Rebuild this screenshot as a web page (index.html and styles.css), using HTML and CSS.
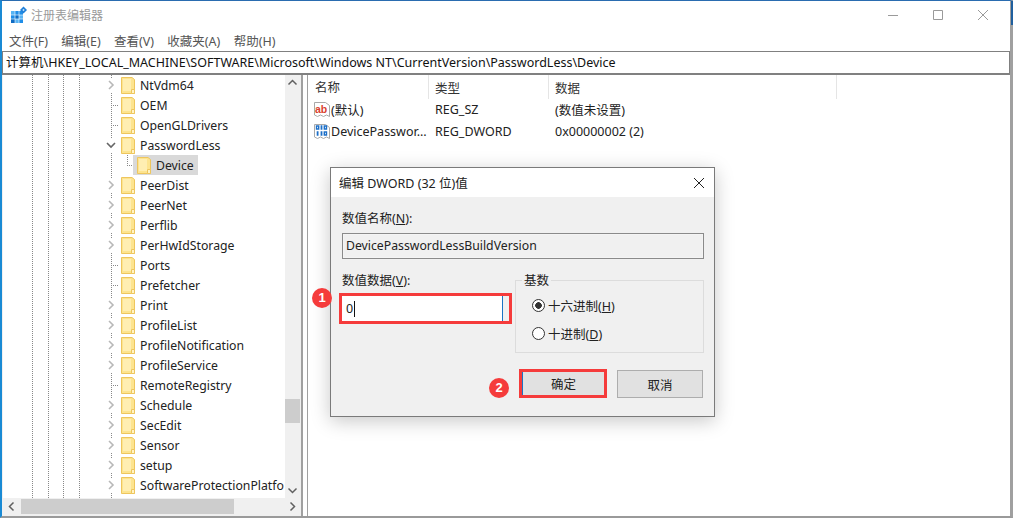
FILE: index.html
```
<!DOCTYPE html>
<html lang="zh-CN">
<head>
<meta charset="utf-8">
<title>注册表编辑器</title>
<link rel="stylesheet" href="styles.css">
</head>
<body>
<svg class="defs" width="0" height="0" aria-hidden="true">
  <symbol id="folder" viewBox="0 0 14 17">
    <path d="M.5.5h10.500l2.500 2v14H.5z" fill="#fde48f" stroke="#eec65e"/>
    <path d="M2 2h8v12H2z" fill="#ffeeb2"/>
    <path d="M10.500 12.500h3v4h-3z" fill="#fff3c4" stroke="#eec65e"/>
  </symbol>
  <symbol id="chev-r" viewBox="0 0 10 10"><path d="M3 1l4 4-4 4" fill="none" stroke="#b8b8b8" stroke-width="1.600"/></symbol>
  <symbol id="chev-d" viewBox="0 0 10 10"><path d="M1 3l4 4 4-4" fill="none" stroke="#666" stroke-width="1.600"/></symbol>
</svg>
<div class="window">
  <header class="titlebar">
    <svg class="app-icon" width="18" height="18" viewBox="0 0 18 18">
      <path d="M1 5h12v12H1z" fill="#1f8ee8"/>
      <path d="M1 5h4v4H1zM9 9h4v4H9zM5 13h4v4H5z" fill="#57b4f5"/>
      <path d="M5 9h4v4H5zM1 13h4v4H1z" fill="#0f6cc4"/>
      <path d="M5 5v12M9 5v12M1 9h12M1 13h12" stroke="#fff" stroke-width=".6"/>
      <path d="M13.500 .5l3.500 3.500-3.500 3.500L10 4z" fill="#1f7fd8"/>
      <path d="M13.500 2.800l1.200 1.200-1.200 1.200L12.300 4z" fill="#bfe2fb"/>
    </svg>
    <span class="title">注册表编辑器</span>
    <div class="controls">
      <svg width="12" height="12" viewBox="0 0 12 12"><path d="M1 6.500h10" stroke="#9a9a9a"/></svg>
      <svg width="12" height="12" viewBox="0 0 12 12"><path d="M1.500 1.500h9v9h-9z" fill="none" stroke="#9a9a9a"/></svg>
      <svg width="12" height="12" viewBox="0 0 12 12"><path d="M1 1l10 10M11 1L1 11" stroke="#9a9a9a"/></svg>
    </div>
  </header>
  <nav class="menu">
    <span>文件(F)</span><span>编辑(E)</span><span>查看(V)</span><span>收藏夹(A)</span><span>帮助(H)</span>
  </nav>
  <div class="address">计算机\HKEY_LOCAL_MACHINE\SOFTWARE\Microsoft\Windows NT\CurrentVersion\PasswordLess\Device</div>
  <main class="panes">
    <section class="tree-pane">
      <div class="tree-top">
        <ul class="tree">
          <li class="row"><svg class="arrow"><use href="#chev-r"/></svg><svg class="folder"><use href="#folder"/></svg>NtVdm64</li>
          <li class="row leaf"><i class="arrow"></i><svg class="folder"><use href="#folder"/></svg>OEM</li>
          <li class="row leaf"><i class="arrow"></i><svg class="folder"><use href="#folder"/></svg>OpenGLDrivers</li>
          <li class="row"><svg class="arrow"><use href="#chev-d"/></svg><svg class="folder"><use href="#folder"/></svg>PasswordLess</li>
          <li class="row child"><span class="selected"><svg class="folder"><use href="#folder"/></svg>Device</span></li>
          <li class="row"><svg class="arrow"><use href="#chev-r"/></svg><svg class="folder"><use href="#folder"/></svg>PeerDist</li>
          <li class="row"><svg class="arrow"><use href="#chev-r"/></svg><svg class="folder"><use href="#folder"/></svg>PeerNet</li>
          <li class="row"><svg class="arrow"><use href="#chev-r"/></svg><svg class="folder"><use href="#folder"/></svg>Perflib</li>
          <li class="row"><svg class="arrow"><use href="#chev-r"/></svg><svg class="folder"><use href="#folder"/></svg>PerHwIdStorage</li>
          <li class="row leaf"><i class="arrow"></i><svg class="folder"><use href="#folder"/></svg>Ports</li>
          <li class="row leaf"><i class="arrow"></i><svg class="folder"><use href="#folder"/></svg>Prefetcher</li>
          <li class="row"><svg class="arrow"><use href="#chev-r"/></svg><svg class="folder"><use href="#folder"/></svg>Print</li>
          <li class="row"><svg class="arrow"><use href="#chev-r"/></svg><svg class="folder"><use href="#folder"/></svg>ProfileList</li>
          <li class="row"><svg class="arrow"><use href="#chev-r"/></svg><svg class="folder"><use href="#folder"/></svg>ProfileNotification</li>
          <li class="row"><svg class="arrow"><use href="#chev-r"/></svg><svg class="folder"><use href="#folder"/></svg>ProfileService</li>
          <li class="row leaf"><i class="arrow"></i><svg class="folder"><use href="#folder"/></svg>RemoteRegistry</li>
          <li class="row"><svg class="arrow"><use href="#chev-r"/></svg><svg class="folder"><use href="#folder"/></svg>Schedule</li>
          <li class="row"><svg class="arrow"><use href="#chev-r"/></svg><svg class="folder"><use href="#folder"/></svg>SecEdit</li>
          <li class="row"><svg class="arrow"><use href="#chev-r"/></svg><svg class="folder"><use href="#folder"/></svg>Sensor</li>
          <li class="row"><svg class="arrow"><use href="#chev-r"/></svg><svg class="folder"><use href="#folder"/></svg>setup</li>
          <li class="row"><svg class="arrow"><use href="#chev-r"/></svg><svg class="folder"><use href="#folder"/></svg>SoftwareProtectionPlatfo</li>
        </ul>
        <div class="vscroll">
          <svg width="15" height="15" viewBox="0 0 15 15"><path d="M3.500 9.500l4-4 4 4" fill="none" stroke="#606060" stroke-width="1.500"/></svg>
          <div class="vtrack"><div class="vthumb"></div></div>
          <svg width="15" height="15" viewBox="0 0 15 15"><path d="M3.500 5.500l4 4 4-4" fill="none" stroke="#606060" stroke-width="1.500"/></svg>
        </div>
      </div>
      <div class="hscroll">
        <svg width="18" height="15" viewBox="0 0 18 15"><path d="M10.500 3.500l-4 4 4 4" fill="none" stroke="#606060" stroke-width="1.500"/></svg>
        <div class="hthumb"></div>
        <svg width="18" height="15" viewBox="0 0 18 15"><path d="M7.500 3.500l4 4-4 4" fill="none" stroke="#606060" stroke-width="1.500"/></svg>
      </div>
    </section>
    <section class="list-pane">
      <div class="list-head"><span class="c1">名称</span><span class="c2">类型</span><span class="c3">数据</span></div>
      <div class="list-row">
        <span class="c1">
          <svg class="val-icon" width="16" height="17" viewBox="0 0 16 17"><path d="M.5 1.500h11l4 3v11l-3-1.500-3 1.500-3-1.500-3 1.500-3-1.500z" fill="#fff" stroke="#a9a9a9"/><text x="1" y="11.500" class="ab">ab</text></svg>(默认)
        </span>
        <span class="c2">REG_SZ</span><span class="c3">(数值未设置)</span>
      </div>
      <div class="list-row">
        <span class="c1">
          <svg class="val-icon" width="16" height="17" viewBox="0 0 16 17"><path d="M.5 1.500h11l4 3v11l-3-1.500-3 1.500-3-1.500-3 1.500-3-1.500z" fill="#fff" stroke="#a9a9a9"/><path d="M2.500 3h2.200v3H2.500zM10.300 3h2.200v3h-2.200zM10.300 9h2.200v3h-2.200z" fill="none" stroke="#1c6fc8" stroke-width="1.400"/><path d="M7.500 2.300v4.400M7.500 8.300v4.400M3.600 8.300v4.400" stroke="#1c6fc8" stroke-width="1.800"/></svg>DevicePasswor...
        </span>
        <span class="c2">REG_DWORD</span><span class="c3">0x00000002 (2)</span>
      </div>
    </section>
  </main>
</div>

<div class="dialog">
  <div class="dlg-title">
    <span>编辑 DWORD (32 位)值</span>
    <svg width="12" height="12" viewBox="0 0 12 12"><path d="M1 1l10 10M11 1L1 11" stroke="#222"/></svg>
  </div>
  <div class="dlg-body">
    <label class="lbl">数值名称(<u>N</u>):</label>
    <div class="name-input">DevicePasswordLessBuildVersion</div>
    <div class="dlg-mid">
      <div class="data-col">
        <label class="lbl">数值数据(<u>V</u>):</label>
        <div class="red-box"><div class="data-input">0<i class="caret"></i></div></div>
      </div>
      <fieldset class="base">
        <legend>基数</legend>
        <div class="radio-row"><i class="radio on"></i><span>十六进制(<u>H</u>)</span></div>
        <div class="radio-row"><i class="radio"></i><span>十进制(<u>D</u>)</span></div>
      </fieldset>
    </div>
    <div class="dlg-btns">
      <div class="red-btn"><button class="btn primary">确定</button></div>
      <button class="btn">取消</button>
    </div>
  </div>
</div>
<span class="badge b1">1</span>
<span class="badge b2">2</span>
</body>
</html>
```
FILE: styles.css
```
* { box-sizing: border-box; }
html, body { margin: 0; height: 100%; }
body {
  position: relative;
  width: 1013px;
  height: 518px;
  overflow: hidden;
  background: #fff;
  font-family: "Noto Sans", "Noto Sans CJK SC", sans-serif;
  font-size: 12.5px;
  color: #222;
}
.defs { display: block; height: 0; }
.window {
  width: 1013px;
  height: 518px;
  background: #fff;
  border-top: 1px solid #2a6cb0;
  border-left: 2px solid #1a8ad4;
  border-right: 3px solid #a0a0a0;
  border-bottom: 2px solid #9a9a9a;
  display: flex;
  flex-direction: column;
}
.titlebar {
  height: 28px;
  display: flex;
  align-items: center;
  padding-left: 8px;
  flex: none;
  margin-right: -3px;
  background: linear-gradient(#1f5f9e, #1f5f9e) right top / 2px 24px no-repeat;
}
.app-icon { margin-right: 3px; }
.title { font-size: 12px; color: #9a9a9a; }
.controls { margin-left: auto; display: flex; gap: 33px; padding-right: 24px; align-items: center; }
.menu { height: 22px; flex: none; display: flex; gap: 13.3px; padding-left: 7px; align-items: center; font-size: 12.5px; color: #555; }
.address {
  flex: none;
  height: 24px;
  border: 1px solid #808080;
  border-width: 1px 1px 2px 1px;
  line-height: 21px;
  padding-left: 3px;
  font-size: 12.5px;
  color: #111;
  white-space: nowrap;
  background: #fff;
}
.panes { flex: 1; display: flex; min-height: 0; }
.tree-pane {
  width: 301px;
  flex: none;
  display: flex;
  flex-direction: column;
  border-right: 2px solid #a0a0a0;
  background: #f0f0f0;
  padding-left: 1px;
  padding-bottom: 2px;
}
.tree-top { flex: 1; display: flex; min-height: 0; }
.tree {
  list-style: none;
  margin: 0;
  padding: 0;
  width: 282px;
  flex: none;
  overflow: hidden;
  font-size: 12.25px;
  background-color: #fff;
  background-image:
    linear-gradient(#888 50%, transparent 50%),
    linear-gradient(#888 50%, transparent 50%),
    linear-gradient(#888 50%, transparent 50%),
    linear-gradient(#888 50%, transparent 50%),
    linear-gradient(#888 50%, transparent 50%);
  background-size: 1px 2px;
  background-repeat: repeat-y;
  background-position: 29px 0, 45px 0, 60px 0, 76px 0, 108px 0;
}
.row { height: 20px; display: flex; align-items: center; white-space: nowrap; padding-left: 103px; }
.row .arrow { width: 10px; height: 10px; flex: none; margin-right: 5px; background: #fff; outline: 2px solid #fff; }
.row .folder { width: 14px; height: 17px; flex: none; margin-right: 5px; background: #fff; outline: 1px solid #fff; }
.row.leaf .arrow {
  background: repeating-linear-gradient(90deg, #888 0 1px, transparent 1px 2px) 0 50% / 7px 1px no-repeat;
  width: 7px;
  margin-left: 5px;
  margin-right: 3px;
  outline: 0;
}
.row.child {
  padding-left: 130px;
  background:
    repeating-linear-gradient(90deg, #888 0 1px, transparent 1px 2px) 124px 50% / 6px 1px no-repeat,
    repeating-linear-gradient(#888 0 1px, transparent 1px 2px) 124px 0 / 1px 10px no-repeat;
}
.selected { display: flex; align-items: center; height: 20px; width: 65px; background: #d9d9d9; padding: 0 4px; }
.selected .folder { background: transparent; outline: 0; }
.vscroll { width: 15px; flex: none; display: flex; flex-direction: column; background: #f0f0f0; }
.vtrack { flex: 1; padding-top: 309px; }
.vthumb { height: 24px; background: #cdcdcd; }
.hscroll { height: 16px; flex: none; display: flex; align-items: center; justify-content: space-between; background: #f0f0f0; }
.hthumb { width: 213px; height: 15px; background: #cdcdcd; margin-right: auto; }
.list-pane { flex: 1; margin-left: 4px; border-left: 1px solid #a0a0a0; min-width: 0; }
.list-head { height: 24px; display: flex; align-items: flex-start; color: #333; }
.list-head span { height: 24px; line-height: 27px; border-right: 1px solid #e5e5e5; }
.c1 { width: 121px; padding-left: 7px; flex: none; display: flex; align-items: center; white-space: nowrap; }
.c2 { width: 120px; padding-left: 6px; flex: none; }
.c3 { width: 288px; padding-left: 6px; flex: none; }
.list-row { height: 21px; display: flex; align-items: center; }
.list-row + .list-row { margin-top: 1px; }
.list-row .c1 { padding-left: 6px; }
.val-icon { margin-right: 1px; flex: none; }
.ab { font: bold 10.5px "Liberation Sans", sans-serif; fill: #d9402e; }
.dialog {
  position: absolute;
  left: 330px;
  top: 167px;
  width: 385px;
  height: 250px;
  background: #f0f0f0;
  border: 1px solid #7a7a7a;
  box-shadow: 0 4px 18px rgba(0,0,0,.22);
  display: flex;
  flex-direction: column;
  color: #222;
}
.dlg-title { height: 29px; flex: none; background: #fff; display: flex; align-items: center; justify-content: space-between; padding: 0 9px 0 8px; font-size: 12.5px; }
.dlg-body { flex: 1; padding: 14px 10px 0 11px; display: flex; flex-direction: column; }
.lbl { display: block; line-height: 16px; font-size: 12.5px; }
.name-input { margin-top: 6px; height: 26px; border: 1px solid #8a8a8a; background: #f0f0f0; line-height: 23px; padding-left: 3px; font-size: 12.25px; box-shadow: inset 0 0 0 1px #f4f4f4; }
.dlg-mid { display: flex; justify-content: space-between; margin-top: 13px; }
.data-col { width: 173px; margin-left: -3px; }
.data-col .lbl { margin-left: 3px; margin-top: 1px; }
.red-box { margin-top: 4px; width: 173px; height: 31px; border: 3px solid #f53b3b; background: #f0f0f0; }
.data-input { width: 161px; height: 100%; background: #fff; border-right: 1px solid #1a74c4; line-height: 22px; padding-left: 4px; display: flex; align-items: center; }
.caret { width: 1px; height: 16px; background: #111; margin-left: 1px; }
.base { width: 189px; height: 81px; margin: 0; padding: 0 0 0 16px; border: 1px solid #dcdcdc; border-radius: 0; }
.base legend { padding: 2px 2px 0; margin-left: -10px; line-height: 14px; font-size: 12.5px; }
.radio-row { display: flex; align-items: center; height: 28px; gap: 3px; }
.radio-row:first-of-type { margin-top: 3px; }
.radio { width: 13px; height: 13px; border-radius: 50%; border: 1px solid #333; background: #fff; flex: none; display: flex; }
.radio.on { background: radial-gradient(circle, #333 0 3px, #fff 3.6px); }
.dlg-btns { display: flex; justify-content: flex-end; align-items: flex-end; gap: 10px; margin-top: 16px; padding-right: 1px; }
.red-btn { border: 3px solid #f53b3b; width: 88px; height: 29px; }
.btn { font: inherit; color: #222; width: 86px; height: 28px; background: #e1e1e1; border: 1px solid #adadad; padding: 0; display: block; }
.btn.primary { width: 100%; height: 100%; border: 0; border-left: 1px solid #1a74c4; }
.badge {
  position: absolute;
  width: 20px;
  height: 20px;
  border-radius: 50%;
  background: #f53b3b;
  color: #fff;
  font: bold 13px/20px "Liberation Sans", sans-serif;
  text-align: center;
}
.b1 { left: 312px; top: 288px; }
.b2 { left: 489px; top: 378px; }
```
